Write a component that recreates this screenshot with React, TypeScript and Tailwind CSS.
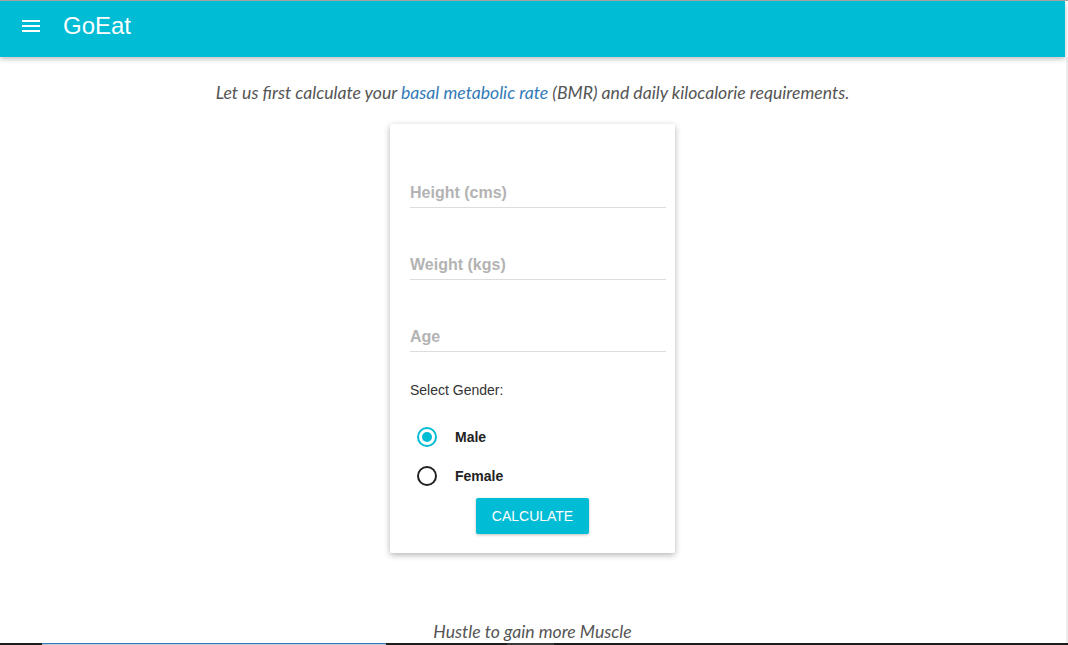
import React from "react";

export default function App() {
  const arial = { fontFamily: '"Liberation Sans", Arial, sans-serif' };
  return (
    <div className="relative h-[645px] w-[1068px] overflow-hidden bg-white flex flex-col" style={arial}>
      <div className="h-px w-full bg-[#a9a9a9]" />
      <div className="flex flex-1">
        <div className="w-[1065px] flex flex-col">
          <header className="h-[56px] bg-[#00bcd4] flex items-center pb-[6px] pl-[22px] shadow-[0_2px_5px_rgba(0,0,0,0.26)] relative z-10">
            <div className="flex flex-col gap-[3px] w-[18px]">
              <span className="block h-[2px] w-[18px] bg-white" />
              <span className="block h-[2px] w-[18px] bg-white" />
              <span className="block h-[2px] w-[18px] bg-white" />
            </div>
            <span className="ml-[23px] text-[24px] text-white leading-none">GoEat</span>
          </header>
          <main className="flex flex-col items-center">
            <p
              className="mt-[24px] text-[17.6px] leading-6 italic text-[#555]"
              style={{ fontFamily: 'Lato, "Open Sans", sans-serif' }}
            >
              Let us first calculate your <a className="text-[#337ab7]">basal metabolic rate</a> (BMR) and daily kilocalorie requirements.
            </p>
            <div className="mt-[19px] w-[285px] bg-white rounded-[2px] shadow-[0_2px_6px_rgba(0,0,0,0.3)] pl-[20px] pr-[9px] pt-[53px] pb-[19px] flex flex-col">
              <input
                placeholder="Height (cms)"
                className="block w-full h-[31px] pt-[2px] border-b border-[#dddddd] outline-none text-[16px] font-bold placeholder:text-[#b3b3b3]"
              />
              <input
                placeholder="Weight (kgs)"
                className="mt-[41px] block w-full h-[31px] pt-[2px] border-b border-[#dddddd] outline-none text-[16px] font-bold placeholder:text-[#b3b3b3]"
              />
              <input
                placeholder="Age"
                className="mt-[41px] block w-full h-[31px] pt-[2px] border-b border-[#dddddd] outline-none text-[16px] font-bold placeholder:text-[#b3b3b3]"
              />
              <div className="mt-[30px] text-[14px] leading-4 text-[#333]">Select Gender:</div>
              <div className="mt-[29px] flex items-center h-[20px] pl-[7px]">
                <span className="w-[20px] h-[20px] rounded-full border-2 border-[#00bcd4] flex items-center justify-center">
                  <span className="w-[10px] h-[10px] rounded-full bg-[#00bcd4]" />
                </span>
                <span className="ml-[18px] text-[14px] font-bold text-[#222]">Male</span>
              </div>
              <div className="mt-[19px] flex items-center h-[20px] pl-[7px]">
                <span className="w-[20px] h-[20px] rounded-full border-2 border-[#222]" />
                <span className="ml-[18px] text-[14px] font-bold text-[#222]">Female</span>
              </div>
              <div className="-ml-[20px] -mr-[9px] mt-[12px] flex justify-center">
                <button className="h-[36px] w-[113px] bg-[#00bcd4] text-white text-[14px] rounded-[2px] shadow-[0_1px_3px_rgba(0,0,0,0.25)]">
                  CALCULATE
                </button>
              </div>
            </div>
            <p
              className="mt-[67px] text-[17.6px] leading-6 italic text-[#555]"
              style={{ fontFamily: 'Lato, "Open Sans", sans-serif' }}
            >
              Hustle to gain more Muscle
            </p>
          </main>
        </div>
        <div className="flex-1 flex flex-col">
          <div className="h-[56px] bg-white" />
          <div className="flex-1 bg-[#ededed] border-l border-white" />
        </div>
      </div>
      <div className="absolute bottom-0 left-0 w-full h-[2px] flex">
        <div className="w-[42px] bg-[#1c1c1c]" />
        <div className="w-[344px] flex flex-col">
          <div className="h-px bg-[#2f7ac0]" />
          <div className="h-px bg-[#c8c8c8]" />
        </div>
        <div className="w-[121px] bg-[#1c1c1c]" />
        <div className="w-[47px] bg-[#3a3a3a]" />
        <div className="flex-1 bg-[#1c1c1c]" />
      </div>
    </div>
  );
}
